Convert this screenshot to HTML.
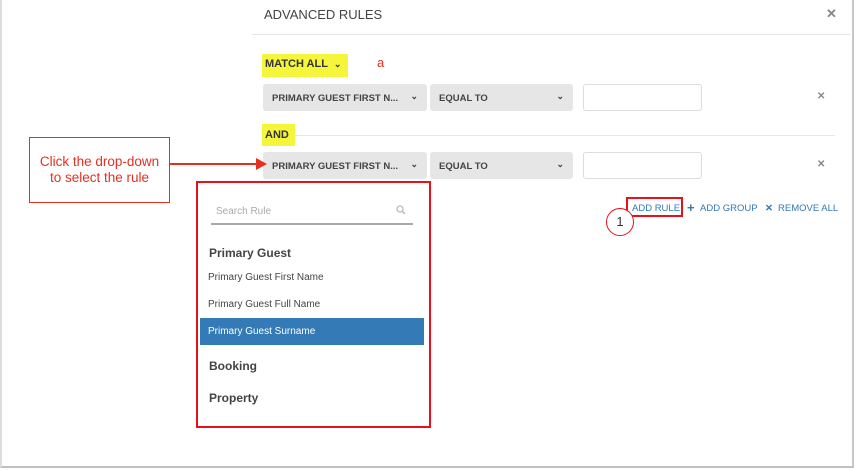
<!DOCTYPE html>
<html><head><style>
*{margin:0;padding:0;box-sizing:border-box}
body{width:855px;height:470px;background:#fff;font-family:"Liberation Sans",sans-serif;position:relative;overflow:hidden}
.frame{position:absolute;left:0;top:0;width:854px;height:468px;border-left:2px solid #ddd;border-right:2px solid #c8c8c8;border-bottom:2px solid #c0c0c0}
.abs{position:absolute}
.sel{position:absolute;height:27px;background:#e6e6e6;border-radius:3px;font-size:9.5px;font-weight:bold;color:#444;padding:9px 0 0 9px}
.sel .c{position:absolute;right:9px;top:7px;font-size:9px}
.inp{position:absolute;width:119px;height:27px;border:1px solid #ddd;border-radius:3px;background:#fff}
.x{position:absolute;font-size:12px;color:#888;font-weight:bold}
.hl{position:absolute;background:#f5f53c}
.blue{color:#2f7ab8;font-size:9.5px;white-space:nowrap}
</style></head><body>
<div class="frame"></div>
<div class="abs" style="left:264px;top:7px;font-size:13px;color:#444">ADVANCED RULES</div>
<div class="x" style="left:826px;top:6px;font-size:13px">✕</div>
<div class="abs" style="left:252px;top:34px;width:598px;height:1px;background:#e4e4e4"></div>
<div class="hl" style="left:262px;top:54px;width:86px;height:23px"></div>
<div class="abs" style="left:265px;top:58px;font-size:11px;font-weight:bold;color:#333">MATCH ALL &nbsp;<span style="font-size:9px">⌄</span></div>
<div class="abs" style="left:377px;top:55px;font-size:13px;color:#e53020">a</div>
<div class="sel" style="left:263px;top:84px;width:164px">PRIMARY GUEST FIRST N...<span class="c">⌄</span></div>
<div class="sel" style="left:430px;top:84px;width:143px">EQUAL TO<span class="c">⌄</span></div>
<div class="inp" style="left:583px;top:84px"></div>
<div class="x" style="left:817px;top:91px;font-size:10px">✕</div>
<div class="abs" style="left:290px;top:135px;width:545px;height:1px;background:#e8e8e8"></div>
<div class="hl" style="left:262px;top:124px;width:33px;height:22px"></div>
<div class="abs" style="left:265px;top:129px;font-size:11px;font-weight:bold;color:#333">AND</div>
<div class="sel" style="left:263px;top:152px;width:164px">PRIMARY GUEST FIRST N...<span class="c">⌄</span></div>
<div class="sel" style="left:430px;top:152px;width:143px">EQUAL TO<span class="c">⌄</span></div>
<div class="inp" style="left:583px;top:152px"></div>
<div class="x" style="left:817px;top:159px;font-size:10px">✕</div>
<div class="abs" style="left:29px;top:137px;width:141px;height:66px;border:1.5px solid #e53020;color:#e53020;font-size:13.5px;text-align:center;padding-top:16px;line-height:16px">Click the drop-down<br>to select the rule</div>
<div class="abs" style="left:170px;top:163px;width:88px;height:2px;background:#e53020"></div>
<div class="abs" style="left:256px;top:158px;width:0;height:0;border-left:11px solid #e53020;border-top:6px solid transparent;border-bottom:6px solid transparent"></div>
<div class="abs" style="left:196px;top:181px;width:235px;height:247px;border:2px solid #e8101a"></div>
<div class="abs" style="left:216px;top:206px;font-size:10px;color:#aaa">Search Rule</div>
<svg class="abs" style="left:396px;top:205px" width="10" height="10" viewBox="0 0 10 10"><circle cx="4" cy="4" r="3" fill="none" stroke="#bbb" stroke-width="1.3"/><path d="M6.2 6.2L9 9" stroke="#bbb" stroke-width="1.5"/></svg>
<div class="abs" style="left:211px;top:223px;width:202px;height:2px;background:#aaa"></div>
<div class="abs" style="left:209px;top:246px;font-size:12px;color:#444;font-weight:bold">Primary Guest</div>
<div class="abs" style="left:208px;top:272px;font-size:10px;color:#444">Primary Guest First Name</div>
<div class="abs" style="left:208px;top:299px;font-size:10px;color:#444">Primary Guest Full Name</div>
<div class="abs" style="left:200px;top:318px;width:224px;height:27px;background:#337ab7"></div>
<div class="abs" style="left:208px;top:326px;font-size:10px;color:#fff">Primary Guest Surname</div>
<div class="abs" style="left:209px;top:359px;font-size:12px;color:#444;font-weight:bold">Booking</div>
<div class="abs" style="left:209px;top:391px;font-size:12px;color:#444;font-weight:bold">Property</div>
<div class="abs" style="left:626px;top:197px;width:57px;height:20px;border:2px solid #e8101a"></div>
<div class="abs blue" style="left:632px;top:203px">ADD RULE</div>
<div class="abs blue" style="left:687px;top:200px;font-size:13px;font-weight:bold">+</div>
<div class="abs blue" style="left:700px;top:203px">ADD GROUP</div>
<div class="abs blue" style="left:765px;top:203px;font-weight:bold">✕</div>
<div class="abs blue" style="left:778px;top:203px">REMOVE ALL</div>
<div class="abs" style="left:606px;top:208px;width:28px;height:28px;border:1.5px solid #e8101a;border-radius:50%;font-size:13px;text-align:center;line-height:25px;color:#333;background:#fff">1</div>
</body></html>
